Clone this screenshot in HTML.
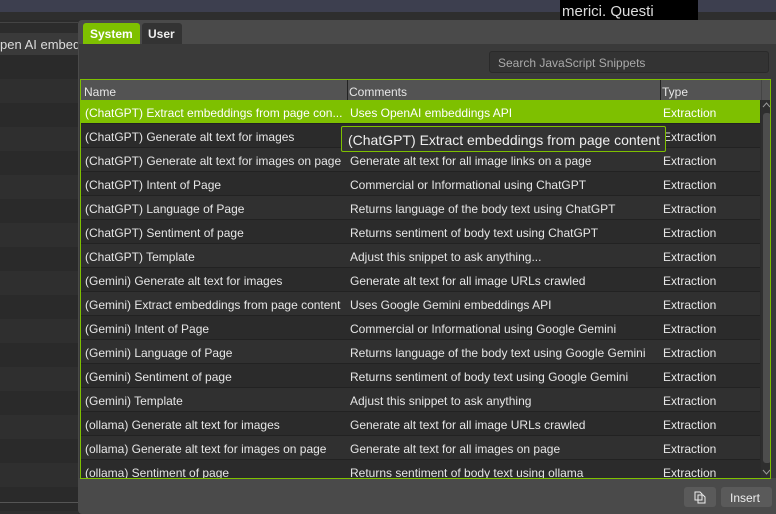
<!DOCTYPE html>
<html><head><style>
*{margin:0;padding:0;box-sizing:border-box}
body{width:776px;height:514px;overflow:hidden;background:#2c2c2c;font-family:"Liberation Sans",sans-serif;font-size:12px;color:#e6e6e6;position:relative}
.abs{position:absolute}
.row{position:absolute;left:81px;width:679px;height:24px;border-bottom:1px solid #222}
.row span{position:absolute;top:6px;white-space:nowrap;overflow:hidden}
.c1{left:4px;width:260px}.c2{left:269px;width:310px}.c3{left:582px}
</style></head><body>
<div class="abs" style="left:0;top:0;width:776px;height:12px;background:#3d3f4f"></div>
<div class="abs" style="left:0;top:12px;width:776px;height:8px;background:#2e2e2e"></div>
<div class="abs" style="left:560px;top:0;width:138px;height:20px;background:#000;color:#ddd;font-size:15px;padding:3px 0 0 2px;white-space:nowrap;overflow:hidden">merici. Questi</div>
<div class="abs" style="left:0;top:22px;width:78px;height:1px;background:#444"></div>
<div class="abs" style="left:0;top:33px;width:78px;height:22px;background:#3a3a3a;color:#ddd;font-size:13px;padding:4px 0 0 0;white-space:nowrap;overflow:hidden">pen AI embed</div>
<div class="abs" style="left:0;top:55px;width:78px;height:459px;background:repeating-linear-gradient(#2a2a2a 0 24px,#2f2f2f 24px 48px)"></div>
<div class="abs" style="left:0;top:502px;width:78px;height:1px;background:#555"></div>
<div class="abs" style="left:78px;top:20px;width:698px;height:494px;background:#4a4a4a;border-radius:4px 0 0 4px"></div>
<div class="abs" style="left:83px;top:23px;width:57px;height:21px;background:#7ec000;border-radius:3px 3px 0 0;color:#fff;font-weight:bold;font-size:12px;padding:4px 0 0 7px">System</div>
<div class="abs" style="left:142px;top:23px;width:40px;height:21px;background:#333;border-radius:3px 3px 0 0;color:#eee;font-weight:bold;font-size:12px;padding:4px 0 0 6px">User</div>
<div class="abs" style="left:79px;top:44px;width:697px;height:434px;background:#3a3a3a"></div>
<div class="abs" style="left:489px;top:51px;width:280px;height:22px;background:#333;border:1px solid #2a2a2a;border-radius:3px;color:#aaa;padding:4px 0 0 8px">Search JavaScript Snippets</div>
<div class="abs" style="left:80px;top:79px;width:691px;height:400px;border:1px solid #7ec000;background:#2b2b2b;overflow:hidden">
<div class="abs" style="left:0;top:0;width:689px;height:20px;background:#535353"></div>
<div class="abs" style="left:3px;top:5px">Name</div>
<div class="abs" style="left:268px;top:5px">Comments</div>
<div class="abs" style="left:581px;top:5px">Type</div>
<div class="abs" style="left:266px;top:0;width:1px;height:398px;background:#222"></div>
<div class="abs" style="left:579px;top:0;width:1px;height:398px;background:#222"></div>
<div class="abs" style="left:680px;top:0;width:1px;height:20px;background:#444"></div>
<div class="abs" style="left:680px;top:20px;width:9px;height:378px;background:#2e2e2e"></div>
<div class="abs" style="left:682px;top:33px;width:8px;height:350px;background:#4d4d4d;border-radius:3px"></div>
<svg class="abs" style="left:681px;top:22px" width="9" height="6"><path d="M1 5L4.5 1L8 5" fill="none" stroke="#999"/></svg>
<svg class="abs" style="left:681px;top:389px" width="9" height="6"><path d="M1 1L4.5 5L8 1" fill="none" stroke="#999"/></svg>
</div>
<div class="row" style="top:100px;background:#7ec000;color:#fff"><span class="c1">(ChatGPT) Extract embeddings from page con...</span><span class="c2">Uses OpenAI embeddings API</span><span class="c3">Extraction</span></div>
<div class="row" style="top:124px;background:#2b2b2b"><span class="c1">(ChatGPT) Generate alt text for images</span><span class="c3">Extraction</span></div>
<div class="row" style="top:148px;background:#303030"><span class="c1">(ChatGPT) Generate alt text for images on page</span><span class="c2">Generate alt text for all image links on a page</span><span class="c3">Extraction</span></div>
<div class="row" style="top:172px;background:#2b2b2b"><span class="c1">(ChatGPT) Intent of Page</span><span class="c2">Commercial or Informational using ChatGPT</span><span class="c3">Extraction</span></div>
<div class="row" style="top:196px;background:#303030"><span class="c1">(ChatGPT) Language of Page</span><span class="c2">Returns language of the body text using ChatGPT</span><span class="c3">Extraction</span></div>
<div class="row" style="top:220px;background:#2b2b2b"><span class="c1">(ChatGPT) Sentiment of page</span><span class="c2">Returns sentiment of body text using ChatGPT</span><span class="c3">Extraction</span></div>
<div class="row" style="top:244px;background:#303030"><span class="c1">(ChatGPT) Template</span><span class="c2">Adjust this snippet to ask anything...</span><span class="c3">Extraction</span></div>
<div class="row" style="top:268px;background:#2b2b2b"><span class="c1">(Gemini) Generate alt text for images</span><span class="c2">Generate alt text for all image URLs crawled</span><span class="c3">Extraction</span></div>
<div class="row" style="top:292px;background:#303030"><span class="c1">(Gemini) Extract embeddings from page content</span><span class="c2">Uses Google Gemini embeddings API</span><span class="c3">Extraction</span></div>
<div class="row" style="top:316px;background:#2b2b2b"><span class="c1">(Gemini) Intent of Page</span><span class="c2">Commercial or Informational using Google Gemini</span><span class="c3">Extraction</span></div>
<div class="row" style="top:340px;background:#303030"><span class="c1">(Gemini) Language of Page</span><span class="c2">Returns language of the body text using Google Gemini</span><span class="c3">Extraction</span></div>
<div class="row" style="top:364px;background:#2b2b2b"><span class="c1">(Gemini) Sentiment of page</span><span class="c2">Returns sentiment of body text using Google Gemini</span><span class="c3">Extraction</span></div>
<div class="row" style="top:388px;background:#303030"><span class="c1">(Gemini) Template</span><span class="c2">Adjust this snippet to ask anything</span><span class="c3">Extraction</span></div>
<div class="row" style="top:412px;background:#2b2b2b"><span class="c1">(ollama) Generate alt text for images</span><span class="c2">Generate alt text for all image URLs crawled</span><span class="c3">Extraction</span></div>
<div class="row" style="top:436px;background:#303030"><span class="c1">(ollama) Generate alt text for images on page</span><span class="c2">Generate alt text for all images on page</span><span class="c3">Extraction</span></div>
<div class="row" style="top:460px;height:18px;background:#2b2b2b;border:none;overflow:hidden"><span class="c1">(ollama) Sentiment of page</span><span class="c2">Returns sentiment of body text using ollama</span><span class="c3">Extraction</span></div>
<div class="abs" style="left:341px;top:126px;width:325px;height:26px;background:#333;border:1px solid #7ec000;border-radius:2px;color:#eee;font-size:14px;padding:5px 0 0 6px;white-space:nowrap">(ChatGPT) Extract embeddings from page content</div>
<div class="abs" style="left:684px;top:487px;width:32px;height:20px;background:#5a5a5a;border-radius:3px">
<svg width="32" height="20" viewBox="0 0 32 20"><path d="M11 5h5l2 2v6h-7z M14 8h5l2 2v6h-7z" fill="#5a5a5a" stroke="#eee" stroke-width="1"/></svg></div>
<div class="abs" style="left:721px;top:487px;width:51px;height:20px;background:#5a5a5a;border-radius:3px;color:#eee;padding:4px 0 0 9px">Insert</div>
</body></html>
